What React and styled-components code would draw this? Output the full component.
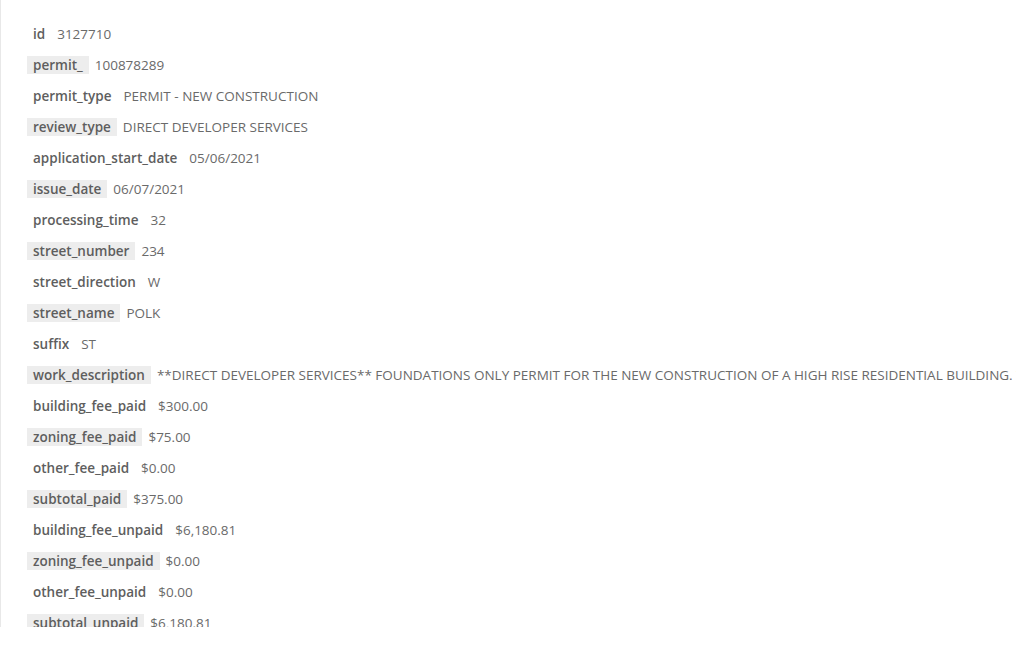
import React from "react";
import styled, { createGlobalStyle } from "styled-components";

const Global = createGlobalStyle`
  html, body { margin: 0; padding: 0; background: #fff; }
  body { font-family: "Open Sans", "Noto Sans", sans-serif; }
`;

const Panel = styled.div`
  box-sizing: border-box;
  height: 627px;
  width: 1016px;
  overflow: hidden;
  border-left: 1px solid #e8e8e8;
  padding: 18px 0 0 26px;
`;

const Row = styled.div`
  display: flex;
  align-items: center;
  height: 31px;
  white-space: nowrap;
  font-size: 13.5px;
`;

const Key = styled.span`
  display: inline-block;
  line-height: 18px;
  padding: 0 6px;
  margin-right: 6px;
  color: #5e5e5e;
  font-weight: 600;
  background: ${(p) => (p.$shade ? "#ededed" : "transparent")};
`;

const Value = styled.span`
  color: #6a6a6a;
  font-weight: 400;
`;

const data = [
  ["id", "3127710"],
  ["permit_", "100878289"],
  ["permit_type", "PERMIT - NEW CONSTRUCTION"],
  ["review_type", "DIRECT DEVELOPER SERVICES"],
  ["application_start_date", "05/06/2021"],
  ["issue_date", "06/07/2021"],
  ["processing_time", "32"],
  ["street_number", "234"],
  ["street_direction", "W"],
  ["street_name", "POLK"],
  ["suffix", "ST"],
  [
    "work_description",
    "**DIRECT DEVELOPER SERVICES** FOUNDATIONS ONLY PERMIT FOR THE NEW CONSTRUCTION OF A HIGH RISE RESIDENTIAL BUILDING. THIS PERMIT IS ISSUED SUBJECT TO CONDITIONS.",
  ],
  ["building_fee_paid", "$300.00"],
  ["zoning_fee_paid", "$75.00"],
  ["other_fee_paid", "$0.00"],
  ["subtotal_paid", "$375.00"],
  ["building_fee_unpaid", "$6,180.81"],
  ["zoning_fee_unpaid", "$0.00"],
  ["other_fee_unpaid", "$0.00"],
  ["subtotal_unpaid", "$6,180.81"],
];

export default function App() {
  return (
    <>
      <Global />
      <Panel>
        {data.map(([k, v], i) => (
          <Row key={k}>
            <Key $shade={i % 2 === 1}>{k}</Key>
            <Value>{v}</Value>
          </Row>
        ))}
      </Panel>
    </>
  );
}
